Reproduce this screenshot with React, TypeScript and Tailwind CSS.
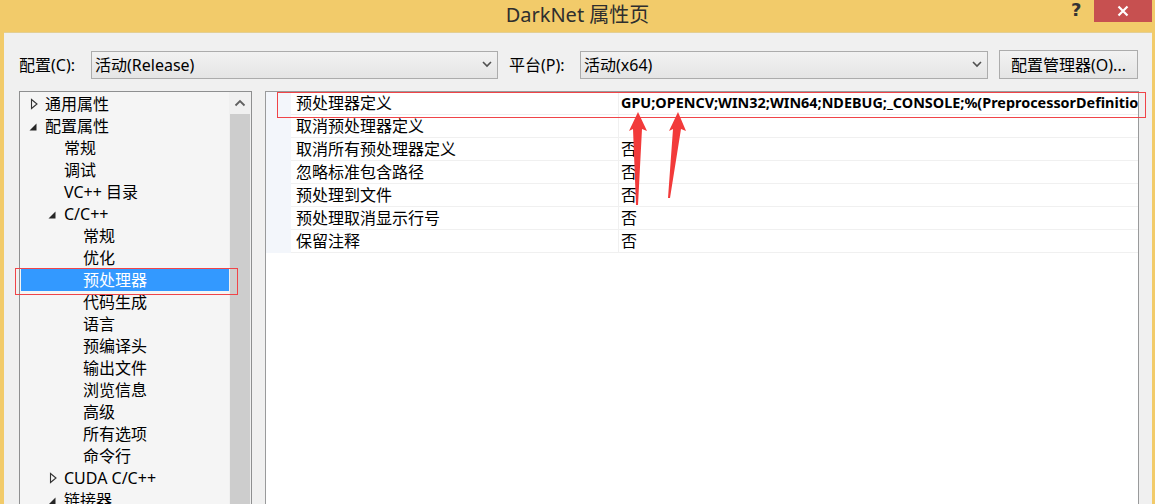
import React from "react";

type Node = { t: string; lvl: 0 | 1 | 2; exp?: "open" | "closed"; sel?: boolean };

const tree: Node[] = [
  { t: "通用属性", lvl: 0, exp: "closed" },
  { t: "配置属性", lvl: 0, exp: "open" },
  { t: "常规", lvl: 1 },
  { t: "调试", lvl: 1 },
  { t: "VC++ 目录", lvl: 1 },
  { t: "C/C++", lvl: 1, exp: "open" },
  { t: "常规", lvl: 2 },
  { t: "优化", lvl: 2 },
  { t: "预处理器", lvl: 2, sel: true },
  { t: "代码生成", lvl: 2 },
  { t: "语言", lvl: 2 },
  { t: "预编译头", lvl: 2 },
  { t: "输出文件", lvl: 2 },
  { t: "浏览信息", lvl: 2 },
  { t: "高级", lvl: 2 },
  { t: "所有选项", lvl: 2 },
  { t: "命令行", lvl: 2 },
  { t: "CUDA C/C++", lvl: 1, exp: "closed" },
  { t: "链接器", lvl: 1, exp: "open" },
];

const indent = ["w-[8px]", "w-[27px]", "w-[46px]"];

const props: { n: string; v: string; bold?: boolean }[] = [
  { n: "预处理器定义", v: "GPU;OPENCV;WIN32;WIN64;NDEBUG;_CONSOLE;%(PreprocessorDefinitions)", bold: true },
  { n: "取消预处理器定义", v: "" },
  { n: "取消所有预处理器定义", v: "否" },
  { n: "忽略标准包含路径", v: "否" },
  { n: "预处理到文件", v: "否" },
  { n: "预处理取消显示行号", v: "否" },
  { n: "保留注释", v: "否" },
];

const Chevron = () => (
  <svg width="10" height="7" viewBox="0 0 10 7" className="shrink-0">
    <path d="M1 1 L5 5 L9 1" fill="none" stroke="#505050" strokeWidth="1.6" />
  </svg>
);

const Expander = ({ exp }: { exp?: "open" | "closed" }) => (
  <div className="w-[17px] h-[22px] flex items-center shrink-0">
    {exp === "closed" && (
      <svg width="10" height="12" viewBox="0 0 10 12" className="ml-[1px]">
        <path d="M2.5 1.5 L8 6 L2.5 10.5 Z" fill="none" stroke="#333" strokeWidth="1.1" />
      </svg>
    )}
    {exp === "open" && (
      <svg width="10" height="12" viewBox="0 0 10 12" className="ml-[0px] mt-[3px]">
        <path d="M8.5 1.5 L8.5 8.5 L1.5 8.5 Z" fill="#262626" />
      </svg>
    )}
  </div>
);

export default function App() {
  return (
    <div className="relative w-[1155px] h-[504px] overflow-hidden bg-[#f2cb6a] font-['Noto_Sans','Noto_Sans_CJK_SC',sans-serif] text-[16px] text-black flex flex-col">
      {/* title bar */}
      <div className="relative h-[32px] shrink-0 flex items-start justify-center">
        <div className="mt-[1px] text-[20px] leading-[28px] text-[#2e2e2e]">DarkNet 属性页</div>
        <div className="absolute left-[1071px] top-[0px] text-[18px] font-bold leading-[20px] text-[#333] font-['DejaVu_Sans',sans-serif]">?</div>
        <div className="absolute left-[1094px] top-0 w-[58px] h-[22px] bg-[#c75050] flex items-center justify-center">
          <svg width="12" height="12" viewBox="0 0 12 12">
            <path d="M1.5 1.5 L10.5 10.5 M10.5 1.5 L1.5 10.5" stroke="#fff" strokeWidth="2.2" />
          </svg>
        </div>
      </div>

      {/* client */}
      <div className="flex-1 ml-[4px] mr-[3px] bg-[#f0f0f0] border-t border-[#e4cf93] flex flex-col">
        {/* config row */}
        <div className="flex items-center mt-[17px] h-[29px] pl-[15px]">
          <div className="w-[72px] leading-none">配置(C):</div>
          <div className="w-[407px] h-[28px] border border-[#acacac] bg-gradient-to-b from-[#f2f2f2] to-[#e5e5e5] flex items-center justify-between pl-[3px] pr-[5px]">
            <span className="leading-none">活动(Release)</span>
            <Chevron />
          </div>
          <div className="w-[82px] pl-[11px] leading-none">平台(P):</div>
          <div className="w-[408px] h-[28px] border border-[#acacac] bg-gradient-to-b from-[#f2f2f2] to-[#e5e5e5] flex items-center justify-between pl-[3px] pr-[5px]">
            <span className="leading-none">活动(x64)</span>
            <Chevron />
          </div>
          <div className="ml-[11px] w-[139px] h-[29px] border border-[#acacac] bg-gradient-to-b from-[#f2f2f2] to-[#e5e5e5] flex items-center justify-center">
            <span className="leading-none">配置管理器(O)...</span>
          </div>
        </div>

        {/* panels */}
        <div className="flex flex-1 mt-[12px] pl-[15px] min-h-0">
          {/* tree */}
          <div className="w-[233px] border border-b-0 border-[#8e8f90] bg-[#f0f0f0] flex">
            <div className="w-[209px] bg-[#f5f5f5] pt-[1px]">
              {tree.map((n, i) => (
                <div
                  key={i}
                  className={
                    "flex h-[22px] items-center " +
                    (n.sel ? "bg-[#3399ff] text-white ml-[1px]" : "")
                  }
                >
                  <div className={indent[n.lvl] + " shrink-0 " + (n.sel ? "-ml-[1px]" : "")} />
                  <Expander exp={n.exp} />
                  <span className="leading-none whitespace-nowrap">{n.t}</span>
                </div>
              ))}
            </div>
            <div className="w-[22px] flex flex-col px-[1px]">
              <div className="h-[22px] flex items-center justify-center">
                <svg width="12" height="8" viewBox="0 0 12 8">
                  <path d="M1.5 6.5 L6 2 L10.5 6.5" fill="none" stroke="#606060" strokeWidth="1.8" />
                </svg>
              </div>
              <div className="flex-1 bg-[#cdcdcd]" />
            </div>
          </div>

          {/* property grid */}
          <div className="ml-[13px] w-[874px] border border-b-0 border-[#999a9b] bg-white">
            {props.map((p, i) => (
              <div key={i} className="flex h-[23px]">
                <div className="w-[25px] bg-[#f3f6fb] shrink-0" />
                <div className="flex-1 flex border-b border-[#f0f0f0] min-w-0">
                  <div className="w-[328px] shrink-0 flex items-center pl-[5px] border-r border-[#f0f0f0]">
                    <span className="leading-none whitespace-nowrap">{p.n}</span>
                  </div>
                  <div className="flex-1 min-w-0 overflow-hidden flex items-center pl-[2px]">
                    <span className={"leading-none whitespace-nowrap " + (p.bold ? "font-bold text-[14.4px]" : "")}>{p.v}</span>
                  </div>
                </div>
              </div>
            ))}
          </div>
        </div>
      </div>
      <div className="absolute left-[1152px] top-[32px] w-[3px] h-[472px] bg-[#f2cb6a]" />

      {/* annotations */}
      <div className="absolute left-[277px] top-[92px] w-[869px] h-[26px] border border-[#f04448]" />
      <div className="absolute left-[15px] top-[268px] w-[223px] h-[27px] border border-[#f04448]" />
      <svg className="absolute left-0 top-0" width="1155" height="504" viewBox="0 0 1155 504">
        <polygon points="638,112 647,131 642,129 638,205 636,205 633,129 629,131" fill="#f23a3a" />
        <polygon points="678,112 686,131 681,129 670,198 668,198 673,129 669,131" fill="#f23a3a" />
      </svg>
    </div>
  );
}
